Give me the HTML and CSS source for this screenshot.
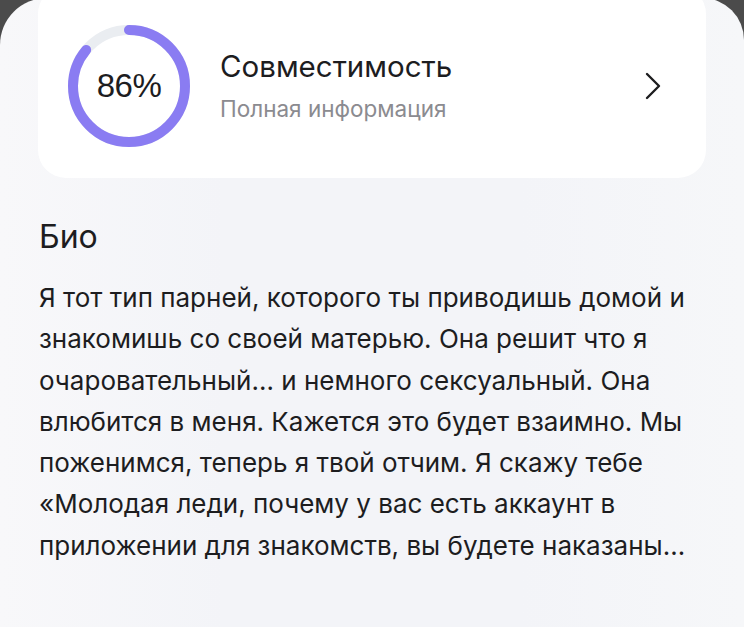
FILE: index.html
```html
<!DOCTYPE html>
<html lang="ru">
<head>
<meta charset="utf-8">
<title>Профиль</title>
<link rel="stylesheet" href="styles.css">
</head>
<body>
<div class="screen">
  <div class="card">
    <div class="ring">
      <svg width="122" height="122" viewBox="0 0 122 122">
        <circle cx="61" cy="61" r="56" fill="none" stroke="#eaedf1" stroke-width="10"/>
        <circle cx="61" cy="61" r="56" fill="none" stroke="#8a7cf2" stroke-width="10" stroke-linecap="round" stroke-dasharray="302.6 400" transform="rotate(-90 61 61)"/>
      </svg>
      <span class="ring-value">86%</span>
    </div>
    <div class="card-text">
      <div class="card-title">Совместимость</div>
      <div class="card-sub">Полная информация</div>
    </div>
    <svg class="chevron" width="18" height="30" viewBox="0 0 18 30">
      <path d="M3 3 L15 15 L3 27" fill="none" stroke="#1d1d1f" stroke-width="2.4" stroke-linecap="round" stroke-linejoin="round"/>
    </svg>
  </div>
  <section class="bio">
    <h2 class="bio-title">Био</h2>
    <p class="bio-text">Я тот тип парней, которого ты приводишь домой и<br>знакомишь со своей матерью. Она решит что я<br>очаровательный… и немного сексуальный. Она<br>влюбится в меня. Кажется это будет взаимно. Мы<br>поженимся, теперь я твой отчим. Я скажу тебе<br>«Молодая леди, почему у вас есть аккаунт в<br>приложении для знакомств, вы будете наказаны…</p>
  </section>
</div>
</body>
</html>
```

FILE: styles.css
```css
html, body {
  margin: 0;
  padding: 0;
}
body {
  background: #4b4b4b;
  font-family: Inter, "Liberation Sans", Arial, sans-serif;
  color: #1d1d1f;
  overflow: hidden;
}
.screen {
  margin-top: -2px;
  min-height: 640px;
  background: linear-gradient(90deg, #f8f8fa 0%, #f3f4f8 30%, #f3f4f8 70%, #f6f7f9 100%);
  border-radius: 47px 42px 0 0;
  padding: 0 38px;
  display: flex;
  flex-direction: column;
}
.card {
  margin-top: -12px;
  height: 192px;
  box-sizing: border-box;
  padding: 8px 44px 0 30px;
  background: #ffffff;
  border-radius: 28px;
  display: flex;
  align-items: center;
}
.ring {
  position: relative;
  width: 122px;
  height: 122px;
  flex: none;
}
.ring svg {
  display: block;
}
.ring-value {
  position: absolute;
  inset: 0;
  display: flex;
  align-items: center;
  justify-content: center;
  font-family: "Liberation Sans", Arial, sans-serif;
  font-size: 33px;
  letter-spacing: -0.5px;
  color: #1d1d1f;
}
.card-text {
  flex: 1;
  padding-left: 30px;
  display: flex;
  flex-direction: column;
  gap: 13.5px;
}
.card-title {
  font-size: 29.5px;
  line-height: 32px;
  color: #1d1d1f;
}
.card-sub {
  font-size: 22.5px;
  line-height: 26px;
  color: #8b8b90;
}
.chevron {
  flex: none;
  display: block;
}
.bio {
  padding: 41px 0 0 1px;
}
.bio-title {
  margin: 0;
  font-size: 32px;
  line-height: 36px;
  font-weight: 400;
  color: #1d1d1f;
}
.bio-text {
  margin: 22px 0 0;
  font-size: 26px;
  line-height: 41.3px;
  color: #1d1d1f;
  white-space: nowrap;
}
```
